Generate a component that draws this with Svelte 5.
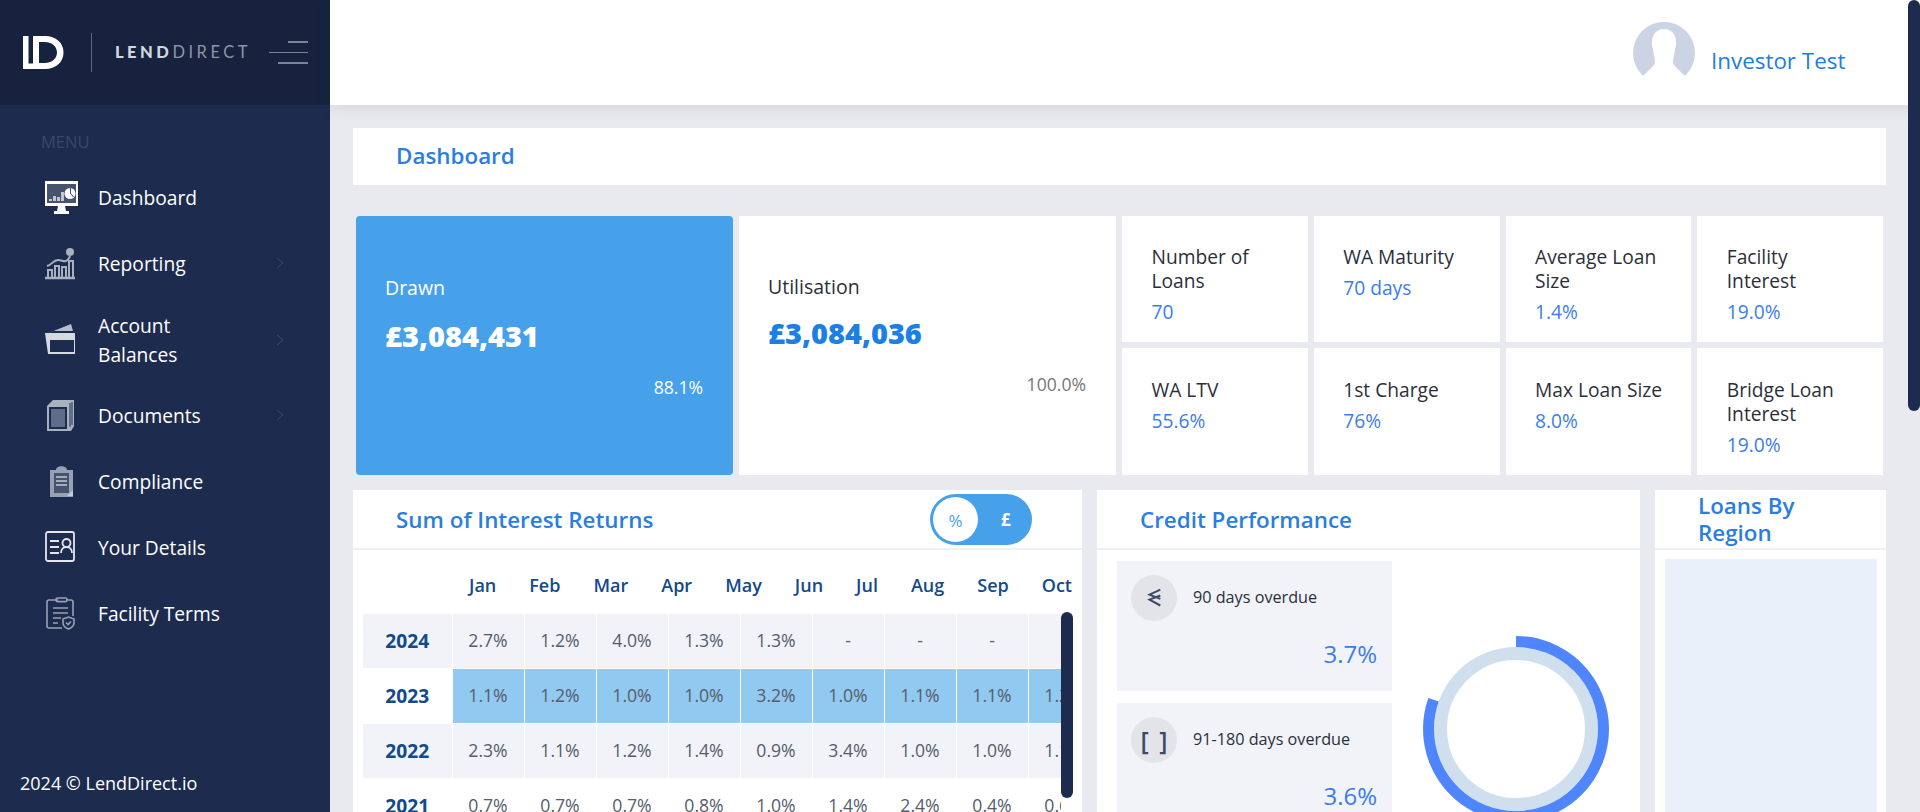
<script lang="ts">
  const nav = [
    { icon: 'dash', label: 'Dashboard', active: true },
    { icon: 'report', label: 'Reporting', arrow: true },
    { icon: 'cards', label: 'Account Balances', arrow: true, tall: true },
    { icon: 'docs', label: 'Documents', arrow: true },
    { icon: 'comp', label: 'Compliance' },
    { icon: 'details', label: 'Your Details' },
    { icon: 'terms', label: 'Facility Terms' }
  ];

  const stats = [
    { label: 'Number of Loans', value: '70' },
    { label: 'WA Maturity', value: '70 days' },
    { label: 'Average Loan Size', value: '1.4%' },
    { label: 'Facility Interest', value: '19.0%' },
    { label: 'WA LTV', value: '55.6%' },
    { label: '1st Charge', value: '76%' },
    { label: 'Max Loan Size', value: '8.0%' },
    { label: 'Bridge Loan Interest', value: '19.0%' }
  ];

  const months = ['Jan', 'Feb', 'Mar', 'Apr', 'May', 'Jun', 'Jul', 'Aug', 'Sep', 'Oct'];

  const returns = [
    { year: 2024, cells: ['2.7%', '1.2%', '4.0%', '1.3%', '1.3%', '-', '-', '-', '-'] },
    { year: 2023, hot: true, cells: ['1.1%', '1.2%', '1.0%', '1.0%', '3.2%', '1.0%', '1.1%', '1.1%', '1.2%'] },
    { year: 2022, cells: ['2.3%', '1.1%', '1.2%', '1.4%', '0.9%', '3.4%', '1.0%', '1.0%', '1.1%'] },
    { year: 2021, cells: ['0.7%', '0.7%', '0.7%', '0.8%', '1.0%', '1.4%', '2.4%', '0.4%', '0.6%'] }
  ];
</script>

{#snippet navIcon(name)}
  {#if name === 'dash'}
    <svg class="ico" viewBox="0 0 33 33">
      <path fill="#fff" d="M0 0h33v25H20l1 5h3v3H9v-3h3l1-5H0z" />
      <rect x="2" y="3" width="29" height="19" fill="#46536f" />
      <path fill="#c3c8d3" d="M4 18h3v2H4zM8 15h3v5H8zM12 16h3v4h-3zM16 11h3v9h-3z" />
      <circle cx="25" cy="12.500" r="5.500" fill="#fff" />
      <path fill="#46536f" d="M25 12.500V7h1v5.500l3 3-.8.8z" />
    </svg>
  {:else if name === 'report'}
    <svg class="ico" viewBox="0 0 33 33" fill="none" stroke="#a9b1c1" stroke-width="2">
      <path d="M3 30V23h4v7M10 30V19h4v11M17 30V20h4v10M24 30V14h4v16" />
      <path stroke-width="2.500" d="M0 31h30" />
      <path d="M2 19c5-1 6-6 11-6 4 0 5 2 8 1 3-1 3-3 4-5" />
      <circle cx="25" cy="5" r="4" fill="#a9b1c1" stroke="none" />
    </svg>
  {:else if name === 'cards'}
    <svg class="ico" viewBox="0 0 33 33">
      <path fill="#b7bdca" d="M1 11 26 1l2 7H8z" />
      <path fill="#d5d9e1" d="M0 10h30v21H3z" />
      <rect x="5" y="17" width="24" height="12" fill="#1d2b4e" />
    </svg>
  {:else if name === 'docs'}
    <svg class="ico" viewBox="0 0 33 33">
      <path fill="#a9b1c1" d="M2 7 8 1h21v26l-3 5H2z" />
      <rect x="4" y="8" width="18" height="22" fill="#1d2b4e" />
      <rect x="6" y="10" width="14" height="18" fill="#606d88" />
      <path stroke="#1d2b4e" stroke-width="1" d="M25 4v24M27 3v23" />
    </svg>
  {:else if name === 'comp'}
    <svg class="ico" viewBox="0 0 33 33">
      <path fill="#98a1b4" d="M5 5h6c0-5 11-5 11 0h6v27H5z" />
      <rect x="9" y="8" width="15" height="20" fill="#46536f" />
      <path stroke="#c5cad5" stroke-width="1.600" d="M11 12h11M11 16h11M11 20h11" />
      <path fill="#c5cad5" d="M28 25v6h-6z" />
    </svg>
  {:else if name === 'details'}
    <svg class="ico" viewBox="0 0 33 33" fill="none" stroke="#e4e6eb" stroke-width="1.800">
      <rect x="1" y="1" width="28" height="29" rx="2" />
      <path d="M5 10h9M5 16h9M5 22h9" />
      <circle cx="21.500" cy="12" r="4" />
      <path d="M16 22c0-8 11-8 11 0" />
    </svg>
  {:else}
    <svg class="ico" viewBox="0 0 33 33" fill="none" stroke="#98a1b4" stroke-width="1.600">
      <path d="M13 3H4Q2 3 2 5v24q0 2 2 2h13M21 3h5q2 0 2 2v14" />
      <rect x="11" y="1" width="11" height="3.600" rx="1.500" />
      <path d="M8 11h15M8 16h15M8 21h8M8 26h5" />
      <path d="M18 22l5.500-2 5.500 2v4c0 3-3 5-5.500 6-2.500-1-5.500-3-5.500-6z" />
      <path d="M21 25.500l2 2 3-3" />
    </svg>
  {/if}
{/snippet}

<div class="app">
  <aside class="sidebar">
    <div class="brand">
      <svg class="logo" viewBox="0 0 41 33">
        <path fill="#fff" fill-rule="evenodd" d="M0 0h5.500v27.500H10V0h12c11 0 18.500 7 18.500 16.500S33 33 22 33H0zM16 6v21h6c6 0 12-4 12-10.500S28 6 22 6z" />
      </svg>
      <span class="divider"></span>
      <span class="wordmark"><b>LEND</b>DIRECT</span>
      <span class="burger"><i></i><i></i><i></i></span>
    </div>
    <div class="menu-title">MENU</div>
    <nav class="menu">
      {#each nav as item}
        <div class="item" class:tall={item.tall}>
          <span class="icon-box">{@render navIcon(item.icon)}</span>
          <span class="item-label">{item.label}</span>
          {#if item.arrow}
            <svg class="chev" viewBox="0 0 8 12" fill="none" stroke="#3d4a69" stroke-width="1"><path d="M1 1l6 5-6 5" /></svg>
          {/if}
        </div>
      {/each}
    </nav>
    <div class="copy">2024 © LendDirect.io</div>
  </aside>

  <main class="main">
    <header class="topbar">
      <svg class="avatar" viewBox="0 0 62 62">
        <circle cx="31" cy="31" r="31" fill="#cbd3e4" />
        <path fill="#fff" d="M31 7c-8 0-12 6-12 13 0 3 0 5 1 7 0 5 2 8 2 13 0 3-3 5-12 14l1 8h40l1-8c-9-9-12-11-12-14 0-5 2-8 2-13 1-2 1-4 1-7 0-7-4-13-12-13z" />
        <rect x="0" y="54" width="62" height="8" fill="#fff" />
      </svg>
      <span class="user">Investor Test</span>
    </header>

    <div class="content">
      <div class="page-title">Dashboard</div>

      <section class="summary">
        <div class="big drawn">
          <div class="big-label">Drawn</div>
          <div class="big-value">£3,084,431</div>
          <div class="big-pct">88.1%</div>
        </div>
        <div class="big util">
          <div class="big-label">Utilisation</div>
          <div class="big-value">£3,084,036</div>
          <div class="big-pct">100.0%</div>
        </div>
        <div class="stats">
          {#each stats as s}
            <div class="stat">
              <div class="stat-label">{s.label}</div>
              <div class="stat-value">{s.value}</div>
            </div>
          {/each}
        </div>
      </section>

      <section class="panels">
        <div class="panel returns">
          <div class="panel-head">
            <h2>Sum of Interest Returns</h2>
            <div class="toggle"><span class="knob">%</span><span class="pound">£</span></div>
          </div>
          <div class="months">
            {#each months as m}<span>{m}</span>{/each}
          </div>
          <div class="table-wrap">
            <table>
              <tbody>
                {#each returns as row}
                  <tr class:hot={row.hot}>
                    <th>{row.year}</th>
                    {#each row.cells as c}<td>{c}</td>{/each}
                  </tr>
                {/each}
              </tbody>
            </table>
          </div>
          <span class="inner-thumb"></span>
        </div>

        <div class="panel credit">
          <div class="panel-head"><h2>Credit Performance</h2></div>
          <div class="credit-body">
            <div class="overdue-list">
              <div class="overdue">
                <div class="overdue-top">
                  <span class="round">
                    <svg viewBox="0 0 18 22" width="15" height="20" fill="none" stroke="#3c4a67" stroke-width="2.400"><path d="M16 1 3 7l13 5M16 8 3 13l13 7" /></svg>
                  </span>
                  <span>90 days overdue</span>
                </div>
                <div class="overdue-val">3.7%</div>
              </div>
              <div class="overdue">
                <div class="overdue-top">
                  <span class="round bracket">[ ]</span>
                  <span>91-180 days overdue</span>
                </div>
                <div class="overdue-val">3.6%</div>
              </div>
            </div>
            <svg class="donut" viewBox="0 0 190 190">
              <circle cx="95" cy="95" r="75.500" fill="none" stroke="#d0dfee" stroke-width="13" />
              <circle cx="95" cy="95" r="87.500" fill="none" stroke="#4f85fd" stroke-width="11" stroke-dasharray="441.500 549.800" transform="rotate(-90 95 95)" />
            </svg>
          </div>
        </div>

        <div class="panel region">
          <div class="panel-head"><h2>Loans By Region</h2></div>
          <div class="map"></div>
        </div>
      </section>
    </div>
  </main>

  <span class="page-thumb"></span>
</div>

<style>
:global(body) {
  margin: 0;
  font-family: "Open Sans", "Noto Sans", sans-serif;
}
.app {
  position: relative;
  display: flex;
  width: 1920px;
  height: 812px;
  overflow: hidden;
  background: #e9eaef;
  color: #2b2f3a;
}

/* sidebar */
.sidebar {
  display: flex;
  flex-direction: column;
  flex: 0 0 330px;
  height: 812px;
  background: #1d2b4e;
  color: #fff;
}
.brand {
  display: flex;
  align-items: center;
  flex: 0 0 105px;
  padding-left: 23px;
  box-sizing: border-box;
  background: #17223e;
}
.logo {
  width: 41px;
  height: 33px;
  margin-top: -1px;
}
.divider {
  width: 1px;
  height: 39px;
  margin: -1px 23px 0 27px;
  background: #5b6680;
}
.wordmark {
  width: 154px;
  margin-top: -1px;
  font-family: "Lato", sans-serif;
  font-size: 16.500px;
  letter-spacing: 3.500px;
  color: #8e95a6;
  white-space: nowrap;
}
.wordmark b {
  color: #d4d7de;
  font-weight: 900;
}
.burger {
  display: flex;
  flex-direction: column;
  align-items: flex-end;
  gap: 9px;
  width: 39px;
}
.burger i {
  display: block;
  height: 2px;
  background: #7b8398;
}
.burger i:nth-child(1) { width: 20px; }
.burger i:nth-child(2) { width: 39px; height: 1px; }
.burger i:nth-child(3) { width: 30px; }
.menu-title {
  margin: 27px 0 0 41px;
  font-size: 16.500px;
  line-height: 20px;
  color: #3b4868;
}
.menu {
  display: flex;
  flex-direction: column;
  margin-top: 12px;
}
.item {
  display: flex;
  align-items: center;
  height: 66px;
  padding-left: 45px;
  font-size: 19.200px;
  line-height: 29px;
}
.item.tall { height: 91px; margin-top: -2px; margin-bottom: -3px; }
.icon-box {
  display: flex;
  flex: 0 0 33px;
  margin-right: 20px;
}
.ico {
  width: 33px;
  height: 33px;
}
.item-label { width: 130px; }
.chev {
  width: 8px;
  height: 12px;
  margin-left: 48px;
}
.copy {
  margin-top: auto;
  padding: 0 0 17px 20px;
  font-size: 18px;
  line-height: 24px;
}

/* main column */
.main {
  flex: 1;
  min-width: 0;
}
.topbar {
  position: relative;
  display: flex;
  align-items: flex-start;
  height: 105px;
  padding: 22px 0 0 1303px;
  box-sizing: border-box;
  background: #fff;
  box-shadow: 0 3px 14px rgba(40, 45, 70, 0.1);
}
.avatar {
  width: 62px;
  height: 62px;
}
.user {
  margin: 24px 0 0 16px;
  font-size: 22.400px;
  line-height: 30px;
  color: #1a7fe0;
}
.content {
  padding: 23px 34px 0 23px;
}
.page-title {
  height: 57px;
  padding-left: 43px;
  background: #fff;
  font-size: 22.400px;
  font-weight: 600;
  line-height: 56px;
  color: #2a7de1;
}

/* summary cards */
.summary {
  display: flex;
  gap: 6px;
  margin: 31px 3px 0;
  height: 259px;
}
.big {
  flex: 0 0 377px;
  padding: 56px 30px 0 29px;
  box-sizing: border-box;
  background: #fff;
}
.big.drawn {
  background: #46a1ea;
  border-radius: 4px;
  color: #fff;
}
.big.util { padding-top: 55px; }
.big-label {
  font-size: 19.500px;
  line-height: 32px;
}
.big-value {
  margin-top: 16px;
  font-size: 29px;
  font-weight: 800;
  line-height: 32px;
  color: #1b7fe6;
}
.util .big-value { margin-top: 14px; }
.drawn .big-value { color: #fff; }
.big-pct {
  margin-top: 19px;
  font-size: 17.600px;
  line-height: 32px;
  text-align: right;
  color: #777;
}
.drawn .big-pct { color: #fff; }
.stats {
  flex: 1;
  display: grid;
  grid-template-columns: repeat(4, 1fr);
  grid-template-rows: 126px 127px;
  gap: 6px;
}
.stat {
  padding: 29px 26px 0 29.500px;
  background: #fff;
}
.stat:nth-child(n + 5) { padding-top: 30px; }
.stat-label {
  font-size: 19.200px;
  line-height: 24px;
}
.stat-value {
  margin-top: 7px;
  font-size: 19.200px;
  line-height: 24px;
  color: #3b7deb;
}

/* lower panels */
.panels {
  display: flex;
  gap: 15px;
  margin-top: 15px;
}
.panel {
  height: 420px;
  background: #fff;
}
.returns { flex: 0 0 729px; position: relative; }
.credit { flex: 0 0 543px; }
.region { flex: 0 0 231px; }
.panel-head {
  display: flex;
  align-items: center;
  justify-content: space-between;
  height: 58px;
  padding: 0 50px 0 43px;
  border-bottom: 2px solid #eef0f5;
}
.panel-head h2 {
  margin: 0;
  font-size: 22.400px;
  font-weight: 600;
  line-height: 27px;
  color: #2a7de1;
}
.region .panel-head { padding: 0 40px 0 43px; }
.toggle {
  display: flex;
  align-items: center;
  width: 102px;
  height: 51px;
  padding: 0 3px;
  box-sizing: border-box;
  border-radius: 26px;
  background: #46a1ea;
  color: #fff;
  font-size: 17px;
}
.knob {
  display: flex;
  align-items: center;
  justify-content: center;
  width: 45px;
  height: 45px;
  border-radius: 50%;
  background: #fff;
  color: #46a1ea;
  padding-top: 3px;
  box-sizing: border-box;
}
.pound {
  margin-left: 23px;
  font-weight: 700;
}
.months {
  display: flex;
  gap: 33px;
  padding: 22px 0 0 116px;
  font-size: 18px;
  font-weight: 600;
  line-height: 26px;
  color: #124a8c;
}
.table-wrap {
  width: 698px;
  margin: 15px 0 0 10px;
  overflow: hidden;
}
table {
  border-collapse: collapse;
  table-layout: fixed;
  width: 737px;
}
th, td {
  height: 55px;
  padding: 0 0 2px;
  border: 1px solid #fff;
  text-align: center;
  box-sizing: border-box;
}
th {
  width: 89px;
  font-size: 19.200px;
  font-weight: 700;
  color: #124a8c;
  border-left: 0;
}
td {
  width: 72px;
  font-size: 17.600px;
  color: #555c6b;
}
tr:nth-child(odd) th, tr:nth-child(odd) td { background: #f1f3f8; }
tr:nth-child(4) th, tr:nth-child(4) td { background: #fff; }
tr.hot td { background: #92c9f0; }
.inner-thumb {
  position: absolute;
  top: 122px;
  left: 708px;
  width: 12px;
  height: 186px;
  border-radius: 6px;
  background: #1d2b4e;
}
.credit-body {
  display: flex;
  padding: 11px 0 0 20px;
}
.overdue-list {
  display: flex;
  flex-direction: column;
  gap: 12px;
  flex: 0 0 275px;
}
.overdue {
  height: 130px;
  padding: 14px 15px 0 14px;
  box-sizing: border-box;
  background: #f1f3f8;
}
.overdue-top {
  display: flex;
  align-items: center;
  gap: 16px;
  font-size: 16.200px;
  color: #2b2f3a;
}
.overdue-top span:last-child { margin-top: -3px; }
.round {
  display: flex;
  align-items: center;
  justify-content: center;
  width: 46px;
  height: 46px;
  border-radius: 50%;
  background: #e2e4ea;
  color: #3c4a67;
}
.bracket {
  font-size: 25px;
  font-weight: 600;
  line-height: 1;
  word-spacing: 4px;
}
.overdue-val {
  margin-top: 16px;
  font-size: 24px;
  line-height: 34px;
  text-align: right;
  color: #3b7deb;
}
.donut {
  flex: 0 0 190px;
  width: 190px;
  height: 190px;
  margin: 73px 0 0 29px;
}
.map {
  height: 300px;
  margin: 9px 9px 0 10px;
  background: #e9f0fa;
}
.page-thumb {
  position: absolute;
  top: 0;
  right: 0;
  width: 12px;
  height: 411px;
  border-radius: 6px;
  background: #1d2b4e;
}
</style>
